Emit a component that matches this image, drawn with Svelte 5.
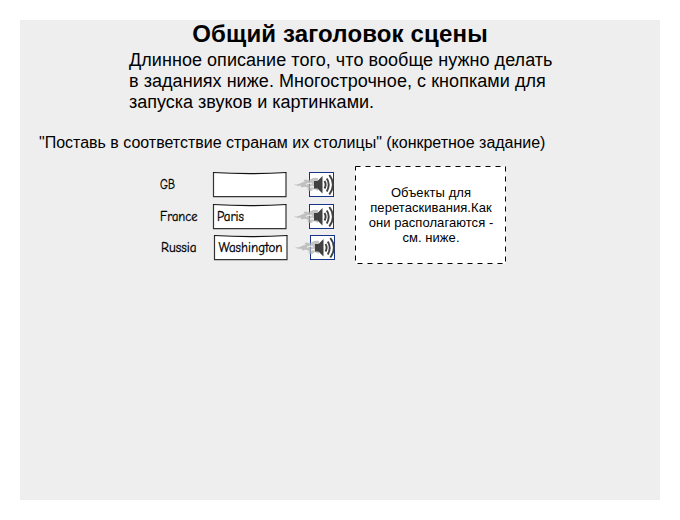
<script>
  const rows = [
    { country: 'GB', labelWidth: 15, answer: '', answerWidth: 0, answerX: 5, top: 0, shift: 0 },
    { country: 'France', labelWidth: 37.5, answer: 'Paris', answerWidth: 27, answerX: 5, top: 0, shift: 0 },
    { country: 'Russia', labelWidth: 35.5, answer: 'Washington', answerWidth: 64, answerX: 5.5, top: -1, shift: 1 }
  ];
</script>

<main class="scene">
  <h1>Общий заголовок сцены</h1>
  <p class="description">Длинное описание того, что вообще нужно делать<br />в заданиях ниже. Многострочное, с кнопками для<br /><span>запуска звуков и картинками.</span></p>
  <h2>"Поставь в соответствие странам их столицы" (конкретное задание)</h2>

  <div class="exercise">
    <div class="pairs">
      {#each rows as row}
        <div class="pair" style:margin-left="{row.shift}px" style:margin-top="{row.top}px">
          <svg class="country" width="52" height="27">
            <text x="0" y="17.5" textLength={row.labelWidth} lengthAdjust="spacingAndGlyphs">{row.country}</text>
          </svg>
          <svg class="slot" width="76" height="27">
            <path d="M1.5 1.5Q38 3.7 74 1.5V25.5H1.5Z" fill="#fff" />
            <path d="M1.5 1.5V25.7H74V1.5" fill="none" stroke="#333" stroke-width="1.2" />
            <path d="M1 1.5Q38 3.7 74.5 1.5" fill="none" stroke="#111" stroke-width="1.2" />
            {#if row.answer}
              <text x={row.answerX} y="17.5" textLength={row.answerWidth} lengthAdjust="spacingAndGlyphs">{row.answer}</text>
            {/if}
          </svg>
          <svg class="sound" width="44" height="27">
            <rect x="17.5" y="1.5" width="24" height="24" fill="#fff" stroke="#153487" />
            <path d="M1 12.5Q5 14.5 9 12Q11 10.5 13 11Q10 8.5 14 8.5Q17 10 19 8Q22 6 26 7V20Q22 17 20 19.5Q18 21 15 18.5Q17 18.5 16 17Q13 15 10 16.5Q8 16 9 14.5Q5 16 1 12.5Z" fill="#b0b0b0" opacity=".75" />
            <path d="M14 13.5Q17 11 20 13M18 16.5Q20 14.5 22 16.5" fill="none" stroke="#eee" stroke-width="1.2" />
            <path d="M22 10H25.5L30.5 5V22.5L25.5 17.5H22Z" fill="#414141" />
            <g fill="none" stroke="#414141" stroke-width="1.9">
              <path d="M32.5 10Q34.7 13.5 32.5 17.5" />
              <path d="M34.8 7.5Q38.6 13.5 34.8 20.5" />
              <path d="M37.3 4Q44.5 13.5 37.3 23.5" />
            </g>
          </svg>
        </div>
      {/each}
    </div>

    <div class="objects">
      <svg class="outline" width="152" height="99"><rect x=".5" y=".5" width="150" height="97" fill="#fff" stroke="#000" stroke-dasharray="5 5" /></svg>
      <p>Объекты для<br />перетаскивания.Как<br />они располагаются -<br />см. ниже.</p>
    </div>
  </div>
</main>

<style>
  :global(body) { background: #fff; }
  .scene {
    box-sizing: border-box;
    width: 640px;
    height: 480px;
    margin: 20px;
    background: #eee;
    color: #000;
    font-family: "Liberation Sans", sans-serif;
    overflow: hidden;
  }
  h1 { margin: 0; font-size: 24px; line-height: 28px; letter-spacing: 0.15px; text-align: center; }
  .description { margin: 2px 0 0 109px; font-size: 18px; line-height: 21px; letter-spacing: 0.05px; white-space: nowrap; }
  .description span { letter-spacing: 0; }
  h2 { margin: 21px 0 0 19px; font-size: 16px; line-height: 18px; letter-spacing: -0.01px; font-weight: 400; white-space: nowrap; }
  .exercise { display: flex; align-items: flex-start; margin: 14px 0 0 140px; }
  .pairs { width: 195px; padding-top: 5px; }
  .pair { display: flex; height: 27px; margin-bottom: 5px; }
  svg { display: block; flex: none; }
  .country, .slot { font: 400 13px "Comic Neue", "Comic Sans MS", "Open Sans", sans-serif; }
  .country text, .slot text { stroke: #000; stroke-width: 0.3px; }
  .sound { margin-left: 4px; }
  .objects { position: relative; width: 152px; height: 99px; }
  .outline { position: absolute; inset: 0; }
  .objects p { position: relative; margin: 0; padding-top: 19px; font-size: 13px; line-height: 15px; letter-spacing: 0.06px; text-align: center; white-space: nowrap; }
</style>
